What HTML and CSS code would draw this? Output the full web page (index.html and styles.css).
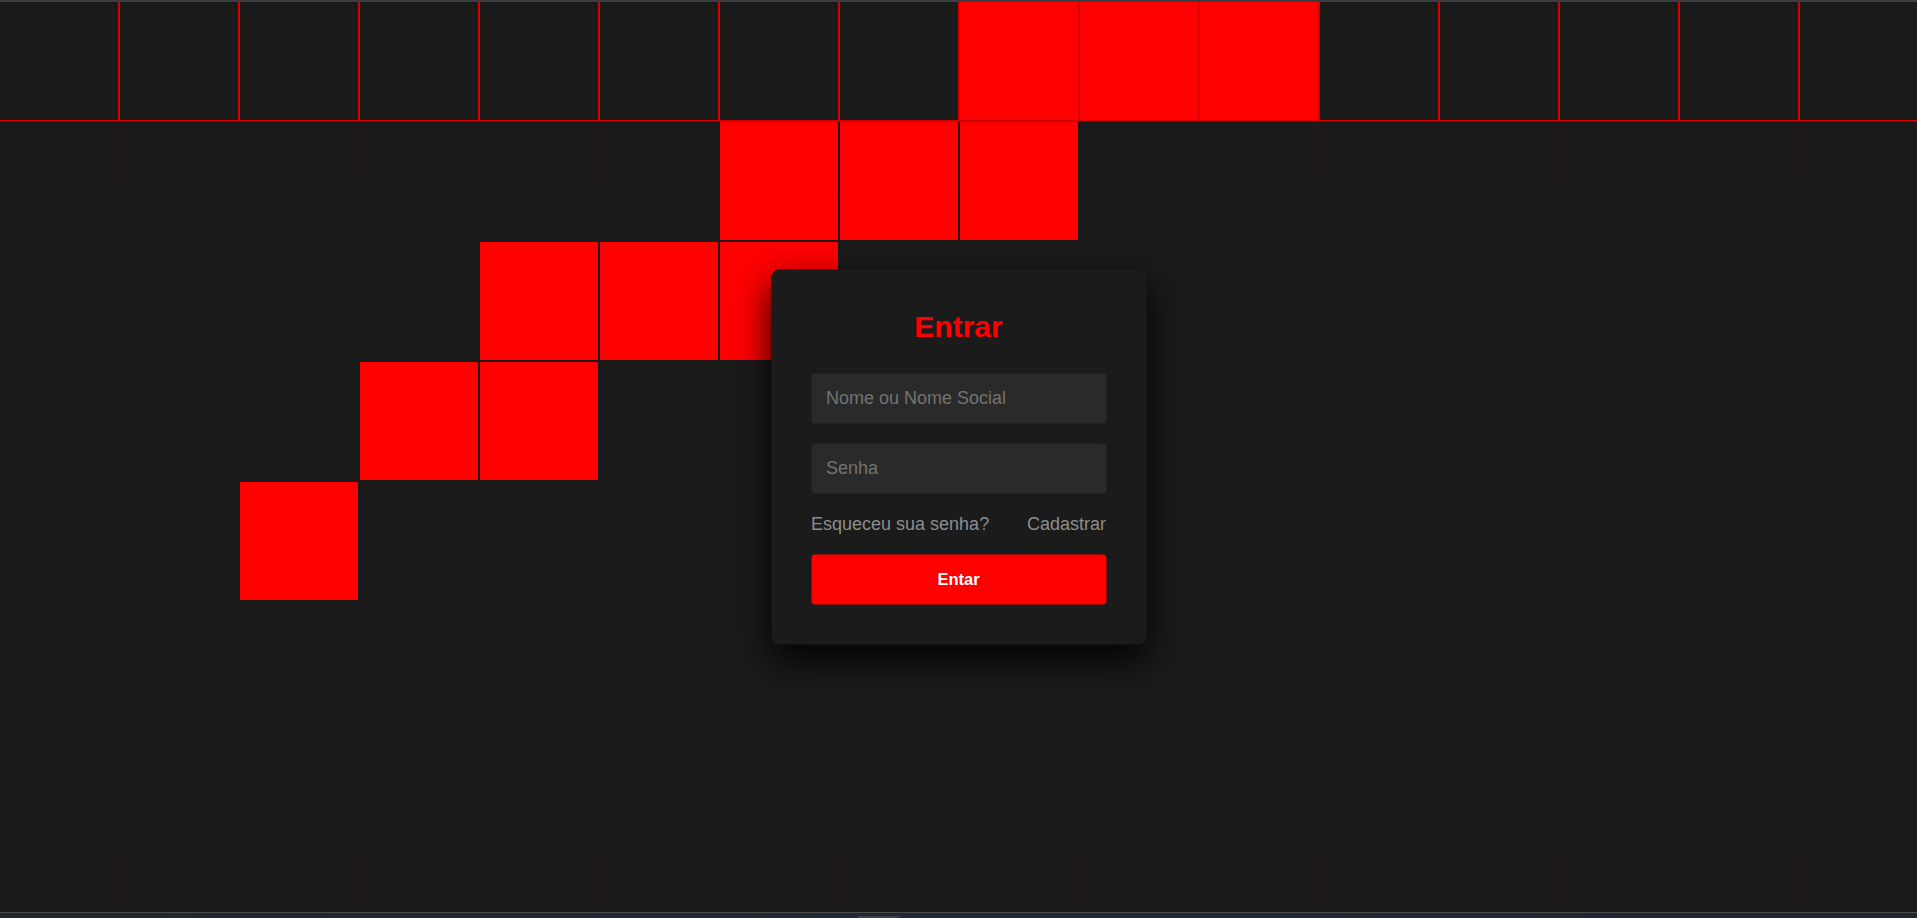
FILE: index.html
```html
<!DOCTYPE html>
<html lang="pt-BR">
<head>
<meta charset="utf-8">
<title>Entrar</title>
<link rel="stylesheet" href="styles.css">
</head>
<body>
<div class="screen">
  <div class="topline"></div>
  <section class="stage">
    <div class="grid" id="grid"></div>
    <div class="signin">
      <h2 class="title">Entrar</h2>
      <form class="form" onsubmit="return false">
        <input class="field" type="text" placeholder="Nome ou Nome Social">
        <input class="field" type="password" placeholder="Senha">
        <div class="links">
          <a href="#" class="link">Esqueceu sua senha?</a>
          <a href="#" class="link">Cadastrar</a>
        </div>
        <button class="submit" type="submit">Entar</button>
      </form>
    </div>
  </section>
  <div class="bottomline"></div>
  <div class="taskbar"><span class="task-item"></span></div>
</div>
<script src="script.js"></script>
</body>
</html>
```

FILE: script.js
```js
(function () {
  var grid = document.getElementById('grid');
  var red = {
    '0-8': 1, '0-9': 1, '0-10': 1,
    '1-6': 1, '1-7': 1, '1-8': 1,
    '2-4': 1, '2-5': 1, '2-6': 1,
    '3-3': 1, '3-4': 1,
    '4-2': 1
  };
  for (var r = 0; r < 8; r++) {
    for (var c = 0; c < 16; c++) {
      var s = document.createElement('span');
      s.className = red[r + '-' + c] ? 'cell cell-on' : 'cell';
      grid.appendChild(s);
    }
  }
})();
```

FILE: styles.css
```css
* {
  box-sizing: border-box;
}

html, body {
  margin: 0;
  padding: 0;
  background: #1a1a1a;
  font-family: "Liberation Sans", Arial, sans-serif;
  overflow: hidden;
}

.screen {
  width: 1917px;
  height: 918px;
  display: flex;
  flex-direction: column;
}

.topline {
  height: 1px;
  flex: none;
  background: #3c3c3c;
}

.stage {
  position: relative;
  height: 911px;
  flex: none;
  overflow: hidden;
  background: linear-gradient(to bottom,
    #d60000 0px,
    #d60000 120px,
    #241515 121px,
    #1e1818 200px,
    #1a1a1a 260px,
    #1a1a1a 838px,
    #1f1717 842px,
    #221616 911px);
}

.grid {
  display: grid;
  grid-template-columns: repeat(16, 118px);
  grid-auto-rows: 118px;
  gap: 2px;
  justify-content: center;
  padding-top: 1px;
}

.cell {
  display: block;
  background: #1a1a1a;
}

.cell-on {
  background: #ff0000;
}

.signin {
  position: absolute;
  left: 50%;
  top: 50%;
  transform: translate(-50%, -50%);
  width: 375px;
  padding: 40px;
  background: #1b1b1b;
  border-radius: 8px;
  box-shadow: 0 15px 35px rgba(0, 0, 0, 0.9);
  display: flex;
  flex-direction: column;
  gap: 30px;
}

.title {
  margin: 0;
  font-size: 30px;
  line-height: 34px;
  font-weight: 700;
  color: #ff0000;
  text-align: center;
}

.form {
  margin: 0;
  display: flex;
  flex-direction: column;
  gap: 20px;
}

.field {
  width: 100%;
  height: 50px;
  border: none;
  outline: none;
  border-radius: 4px;
  background: #2a2a2a;
  padding: 0 15px;
  font-family: "Liberation Sans", Arial, sans-serif;
  font-size: 18px;
  color: #ffffff;
}

.field::placeholder {
  color: #737373;
}

.links {
  display: flex;
  justify-content: space-between;
  line-height: 21px;
}

.link {
  font-size: 18px;
  color: #8d8d8d;
  text-decoration: none;
}

.submit {
  height: 50px;
  border: none;
  border-radius: 4px;
  background: #ff0000;
  color: #ffffff;
  font-family: "Liberation Sans", Arial, sans-serif;
  font-size: 16.5px;
  font-weight: 700;
  cursor: pointer;
}

.bottomline {
  height: 1px;
  flex: none;
  background: #4b4b4b;
}

.taskbar {
  height: 5px;
  flex: none;
  background: linear-gradient(to right, #22262e, #1f2a36 50%, #202630);
  position: relative;
}

.task-item {
  position: absolute;
  left: 857px;
  bottom: 0;
  width: 43px;
  height: 2px;
  background: #3d434c;
  border-radius: 2px 2px 0 0;
}
```
